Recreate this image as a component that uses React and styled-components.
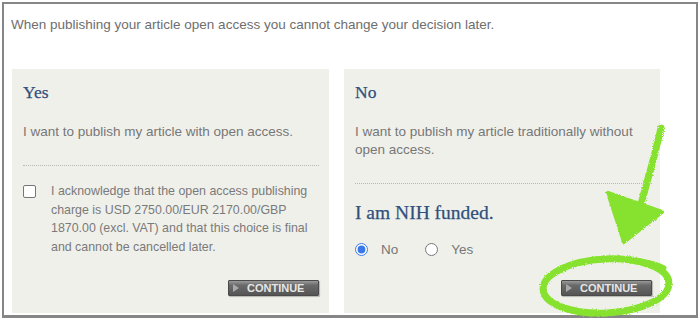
import React from "react";
import styled, { createGlobalStyle } from "styled-components";

const Global = createGlobalStyle`
  html, body { margin: 0; padding: 0; background: #fff; }
  body { font-family: "Liberation Sans", Arial, sans-serif; }
`;

const Page = styled.div`
  position: relative;
  width: 700px;
  height: 321px;
  overflow: hidden;
`;

const Frame = styled.div`
  box-sizing: border-box;
  margin: 2px 0 0 2px;
  width: 696px;
  height: 316px;
  border: 2px solid #868686;
  border-bottom-width: 3px;
  padding: 12px 0 0 7px;
`;

const Intro = styled.p`
  margin: 0;
  font-size: 13.5px;
  line-height: 18px;
  color: #6e6e6e;
`;

const Cards = styled.div`
  display: grid;
  grid-template-columns: 317px 316px;
  column-gap: 15px;
  height: 244px;
  margin: 35px 0 0 1px;
`;

const Card = styled.section`
  display: flex;
  flex-direction: column;
  background: #f0f0eb;
  padding: 13px ${(p) => p.$padRight}px 17px 11px;
`;

const Heading = styled.h2`
  margin: ${(p) => p.$mt || 0}px 0 0;
  font-family: "Liberation Serif", "Times New Roman", serif;
  font-weight: normal;
  font-size: ${(p) => (p.$big ? 19.5 : 17.5)}px;
  line-height: ${(p) => (p.$big ? 24 : 20)}px;
  color: #2f4f7c;
  -webkit-text-stroke: 0.25px #2f4f7c;
`;

const Para = styled.p`
  margin: 21px 0 0;
  font-size: 13.5px;
  line-height: 18px;
  color: #777;
`;

const Divider = styled.hr`
  margin: 24px 0 0;
  border: 0;
  border-top: 1px dotted #b9b9b4;
  height: 0;
`;

const CheckRow = styled.label`
  display: flex;
  align-items: flex-start;
  gap: 15px;
  margin-top: 16px;
`;

const Box = styled.span`
  flex: none;
  width: 13px;
  height: 13px;
  box-sizing: border-box;
  margin-top: 3px;
  border: 1px solid #767676;
  border-radius: 2px;
  background: #fff;
`;

const CheckText = styled.span`
  width: 264px;
  font-size: 12.4px;
  line-height: 18.5px;
  color: #7a7a7a;
`;

const RadioRow = styled.div`
  display: flex;
  align-items: center;
  margin-top: 15px;
  height: 18px;
`;

const Radio = styled.input.attrs({ type: "radio" })`
  margin: 0 13px 0 0;
  width: 13px;
  height: 13px;
  accent-color: #3b78e7;
`;

const RadioLabel = styled.label`
  display: flex;
  align-items: center;
  font-size: 13.5px;
  color: #777;
  margin-right: 27px;
`;

const Button = styled.button`
  margin-top: auto;
  align-self: flex-end;
  width: 91px;
  height: 16px;
  padding: 0 0 0 20px;
  box-sizing: border-box;
  border: 1px solid #4a4a4a;
  border-radius: 1px;
  background: linear-gradient(#9a9a9a 0%, #6a6a6a 30%, #555 100%);
  box-shadow: 1px 1px 1px rgba(0, 0, 0, 0.25);
  color: #e6e6e6;
  font-family: "Liberation Sans", Arial, sans-serif;
  font-weight: bold;
  font-size: 11px;
  line-height: 14px;
  display: flex;
  align-items: center;
  gap: 8px;
`;

const Play = styled.span`
  width: 0;
  height: 0;
  margin-left: -16px;
  border-top: 4px solid transparent;
  border-bottom: 4px solid transparent;
  border-left: 6px solid #a8a8a8;
`;

const Overlay = styled.svg`
  position: absolute;
  left: 0;
  top: 0;
  pointer-events: none;
`;

function Continue() {
  return (
    <Button type="button">
      <Play />
      CONTINUE
    </Button>
  );
}

export default function App() {
  return (
    <>
      <Global />
      <Page>
        <Frame>
          <Intro>
            When publishing your article open access you cannot change your decision later.
          </Intro>
          <Cards>
            <Card $padRight={10}>
              <Heading>Yes</Heading>
              <Para>I want to publish my article with open access.</Para>
              <Divider />
              <CheckRow>
                <Box />
                <CheckText>
                  I acknowledge that the open access publishing charge is USD
                  2750.00/EUR 2170.00/GBP 1870.00 (excl. VAT) and that this
                  choice is final and cannot be cancelled later.
                </CheckText>
              </CheckRow>
              <Continue />
            </Card>
            <Card $padRight={8}>
              <Heading>No</Heading>
              <Para>
                I want to publish my article traditionally without
                <br />
                open access.
              </Para>
              <Divider />
              <Heading $big $mt={17}>
                I am NIH funded.
              </Heading>
              <RadioRow>
                <RadioLabel>
                  <Radio name="nih" defaultChecked />
                  No
                </RadioLabel>
                <RadioLabel>
                  <Radio name="nih" />
                  Yes
                </RadioLabel>
              </RadioRow>
              <Continue />
            </Card>
          </Cards>
        </Frame>
        <Overlay width="700" height="321" viewBox="0 0 700 321">
          <defs>
            <filter id="rough" x="-10%" y="-10%" width="120%" height="120%">
              <feTurbulence type="fractalNoise" baseFrequency="0.9" numOctaves="2" seed="3" />
              <feDisplacementMap in="SourceGraphic" scale="3" />
            </filter>
          </defs>
          <g filter="url(#rough)" fill="none" stroke="#86e22e" strokeLinecap="round" strokeLinejoin="round">
            <path d="M661 128 C656 150 650 172 641 204" strokeWidth="7" />
            <polygon points="608,193 662,212 624,242" fill="#86e22e" strokeWidth="4" />
            <ellipse cx="606" cy="286" rx="63" ry="27" strokeWidth="7" transform="rotate(-3 606 286)" />
            <path d="M560 268 C590 257 640 256 664 268" strokeWidth="5" />
          </g>
        </Overlay>
      </Page>
    </>
  );
}
